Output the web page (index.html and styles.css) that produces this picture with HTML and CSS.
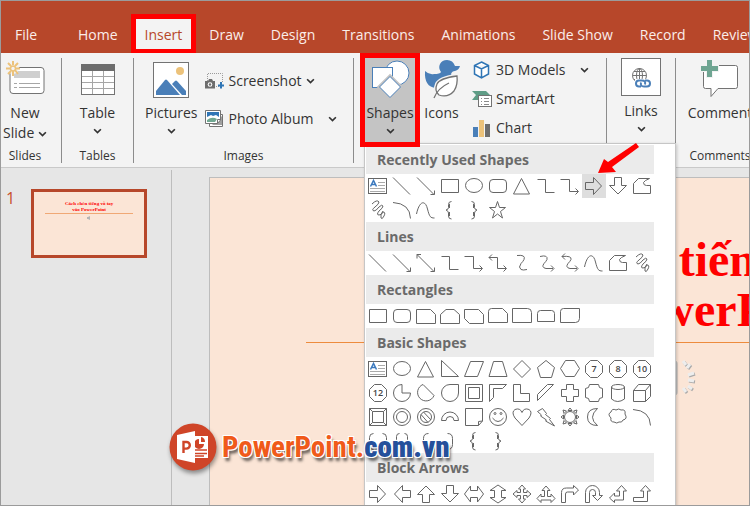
FILE: index.html
```html
<!DOCTYPE html>
<html lang="vi">
<head>
<meta charset="utf-8">
<title>PowerPoint</title>
<link rel="stylesheet" href="styles.css">
</head>
<body>
<div class="app">
  <nav class="tabs">
    <a class="tab tab-file" href="#file">File</a>
    <a class="tab" href="#home">Home</a>
    <a class="tab tab-active" href="#insert">Insert<span class="mark"></span></a>
    <a class="tab" href="#draw">Draw</a>
    <a class="tab" href="#design">Design</a>
    <a class="tab" href="#transitions">Transitions</a>
    <a class="tab" href="#animations">Animations</a>
    <a class="tab" href="#slideshow">Slide Show</a>
    <a class="tab" href="#record">Record</a>
    <a class="tab" href="#review">Review</a>
  </nav>

  <div class="ribbon">
    <section class="group group-slides">
      <div class="group-body">
        <button class="big">
          <svg class="icon" width="38" height="38" viewBox="0 0 38 38">
            <rect x="4" y="5.500" width="34" height="26" rx="3" fill="#fff" stroke="#737373"/>
            <rect x="8" y="9" width="26" height="7" fill="#cfcfcf"/>
            <path d="M8 21.500h3m2 0h21M8 25.500h3m2 0h21" stroke="#a6a6a6"/>
            <circle cx="7" cy="6" r="6" fill="#f3f3f3"/>
            <path d="M7-1V3M7 9v5M0 6.500h4M10 6.500h4M2 1l3 3M9 8l3 4M12 1L9 4M5 9l-3 3" stroke="#ecc27a" stroke-width="2"/>
            <circle cx="7" cy="6.500" r="2.500" fill="none" stroke="#ecc27a" stroke-width="1.500"/>
          </svg>
          <span>New</span>
          <span class="second">Slide <svg class="chev" viewBox="0 0 8 6"><path d="M1 1l3 3 3-3"/></svg></span>
        </button>
      </div>
      <h2>Slides</h2>
    </section>

    <section class="group group-tables">
      <div class="group-body">
        <button class="big">
          <svg class="icon" width="36" height="38" viewBox="0 0 36 38">
            <rect x="1.500" y="2.500" width="33" height="30" fill="#fff" stroke="#737373"/>
            <path d="M1 2h34v7H1z" fill="#6d6d6d"/>
            <path d="M12.500 9v23M23.500 9v23M2 14.500h32M2 20.500h32M2 26.500h32" stroke="#a6a6a6"/>
          </svg>
          <span>Table</span>
          <svg class="chev" viewBox="0 0 8 6"><path d="M1 1l3 3 3-3"/></svg>
        </button>
      </div>
      <h2>Tables</h2>
    </section>

    <section class="group group-images">
      <div class="group-body">
        <button class="big">
          <svg class="icon" width="36" height="38" viewBox="0 0 36 38">
            <rect x=".5" y=".5" width="35" height="35" fill="#fff" stroke="#737373"/>
            <circle cx="27" cy="9" r="4" fill="#ecc27a"/>
            <path d="M3 33V29L12 18q1-1 2 0l13 15z" fill="#4a7fb8"/>
            <path d="M19 22l3-3q1-1 2 0l9 10v4h-4z" fill="#4a7fb8"/>
          </svg>
          <span>Pictures</span>
          <svg class="chev" viewBox="0 0 8 6"><path d="M1 1l3 3 3-3"/></svg>
        </button>
        <div class="stack stack-two">
          <button class="small">
            <svg class="icon" width="20" height="18" viewBox="0 0 20 18">
              <path d="M2.500 9V1.500h15V11M9 14.500h6" fill="none" stroke="#9a9a9a" stroke-dasharray="1 1"/>
              <path d="M0 9h3l1-2h3l1 2h2v7.500H0z" fill="#6d6d6d"/>
              <circle cx="5" cy="12.500" r="2.300" fill="#fff"/><circle cx="5" cy="12.500" r="1.200" fill="#6d6d6d"/>
              <path d="M16 10v6.500M13 13.500h6" stroke="#2f75b5" stroke-width="2"/>
            </svg>
            Screenshot
            <svg class="chev" viewBox="0 0 8 6"><path d="M1 1l3 3 3-3"/></svg>
          </button>
          <button class="small">
            <svg class="icon" width="20" height="18" viewBox="0 0 20 18">
              <path d="M4.500 4.500h13v12h-13z" fill="#fff" stroke="#737373"/>
              <path d="M8 14l9-8v9H7z" fill="#a0a0a0"/>
              <path d="M.5 .5h15V10l-3 3.500H.5z" fill="#fff" stroke="#737373"/>
              <path d="M2 2h12v5l-3-2-3 1-2-1-4 2z" fill="#2f75b5"/>
              <path d="M2 10q5-4 10-1l-2 3H2z" fill="#71a892"/>
              <path d="M15.500 9.500h-3v4" fill="none" stroke="#737373"/>
            </svg>
            Photo Album
            <svg class="chev chev-far" viewBox="0 0 8 6"><path d="M1 1l3 3 3-3"/></svg>
          </button>
        </div>
      </div>
      <h2>Images</h2>
    </section>

    <section class="group group-illustrations">
      <div class="group-body">
        <div class="dropdown">
          <button class="big big-shapes" aria-expanded="true">
            <svg class="icon" width="42" height="38" viewBox="0 0 42 38">
              <circle cx="28" cy="11" r="12" fill="#fff" stroke="#4a7fb8"/>
              <rect x="3.500" y="5.500" width="20" height="20" fill="#fff" stroke="#4a7fb8"/>
              <path d="M21 14.500L31.500 25 21 35.500 10.500 25z" fill="#fff" stroke="#c4c4c4" stroke-width="4"/>
              <path d="M21 14.500L31.500 25 21 35.500 10.500 25z" fill="#fff" stroke="#4a7fb8"/>
            </svg>
            <span>Shapes</span>
            <svg class="chev" viewBox="0 0 8 6"><path d="M1 1l3 3 3-3"/></svg>
          </button>
          <div class="menu">
            <h3>Recently Used Shapes</h3>
            <div class="shape-grid" data-shapes="textbox line arrow rect oval round triangle elbow elbowArrow right down freeform scribble arc curve lbrace rbrace star" data-selected="right"></div>
            <h3>Lines</h3>
            <div class="shape-grid" data-shapes="line arrow doubleArrow elbow elbowArrow elbowDouble curved curvedArrow curvedDouble curve freeform scribble"></div>
            <h3>Rectangles</h3>
            <div class="shape-grid" data-shapes="rect round snipOne snipTop snipDiagonal snipRound roundOne roundTop roundDiagonal"></div>
            <h3>Basic Shapes</h3>
            <div class="shape-grid" data-shapes="textbox oval triangle rightTriangle parallelogram trapezoid diamond pentagon hexagon heptagon octagon decagon dodecagon pie chord teardrop frame halfFrame corner stripe cross plaque can cube bevel donut noSymbol blockArc folded smiley heart lightning sun moon cloud arc doubleBracket doubleBrace lbracket rbracket lbrace rbrace"></div>
            <h3>Block Arrows</h3>
            <div class="shape-grid" data-shapes="right left up down leftRight upDown quad threeWay bent uturn leftUp bentUp"></div>
          </div>
          <span class="mark mark-shapes"></span>
        </div>
        <button class="big big-icons">
          <svg class="icon" width="36" height="40" viewBox="0 0 36 40">
            <path d="M1 10q4 4 9 3 6 0 7-2-3-4-1-8 2-4 7-4 6 0 8 6h5q-1 4-5 5-3 0-4 3l2 4q1 10-9 10H12Q0 26 1 10z" fill="#4a7fb8"/>
            <path d="M33 15Q16 17 13 23q-3 7 2 11 9 3 15-4 4-6 3-15z" fill="#fff" stroke="#f3f3f3" stroke-width="4"/>
            <path d="M33 15Q16 17 13 23q-3 7 2 11 9 3 15-4 4-6 3-15z" fill="#fff" stroke="#737373" stroke-width="1.300"/>
            <path d="M10 37q4-10 15-15" fill="none" stroke="#737373" stroke-width="1.300"/>
          </svg>
          <span>Icons</span>
        </button>
        <div class="stack stack-three">
          <button class="small">
            <svg class="icon" width="20" height="18" viewBox="0 0 20 18">
              <path d="M9.500 1L16.500 4.500v8.500l-7 4-7-4V4.500zM2.500 4.500L9.500 8l7-3.500M9.500 8v9" fill="#fff" stroke="#2f75b5" stroke-width="1.500"/>
            </svg>
            3D Models
            <svg class="chev chev-far" viewBox="0 0 8 6"><path d="M1 1l3 3 3-3"/></svg>
          </button>
          <button class="small">
            <svg class="icon" width="20" height="18" viewBox="0 0 20 18">
              <path d="M0 1h14l4 4-4 5H0l4-5z" fill="#5f9c86"/>
              <rect x="6.500" y="5.500" width="13" height="11" fill="#fff" stroke="#737373"/>
              <path d="M9 8.500h1m2 0h5M9 11.500h1m2 0h5M9 14.500h1m2 0h5" stroke="#8a8a8a"/>
            </svg>
            SmartArt
          </button>
          <button class="small">
            <svg class="icon" width="20" height="18" viewBox="0 0 20 18">
              <path d="M1 8h5v10H1z" fill="#4a7fb8"/><path d="M7 1h5v17H7z" fill="#ecc27a"/><path d="M13 5h5v13h-5z" fill="#6d6d6d"/>
            </svg>
            Chart
          </button>
        </div>
      </div>
    </section>

    <section class="group group-links">
      <div class="group-body">
        <button class="big">
          <svg class="icon" width="40" height="38" viewBox="0 0 40 38">
            <rect x=".5" y=".5" width="39" height="37" fill="#fff" stroke="#737373"/>
            <g fill="none" stroke="#737373"><circle cx="18.500" cy="17.500" r="7"/><ellipse cx="18.500" cy="17.500" rx="3" ry="7"/><path d="M18.500 10v15M11.500 17.500h14M13 13.500h11M13 21.500h11"/></g>
            <rect x="14" y="21" width="16" height="9" fill="#fff"/>
            <g fill="none" stroke="#4a7fb8" stroke-width="2"><path d="M20 28.500h-2a3 3 0 010-6h3q4 0 3 4M24 22.500h2a3 3 0 010 6h-3q-4 0-3-4"/></g>
          </svg>
          <span>Links</span>
          <svg class="chev" viewBox="0 0 8 6"><path d="M1 1l3 3 3-3"/></svg>
        </button>
      </div>
    </section>

    <section class="group group-comments">
      <div class="group-body">
        <button class="big">
          <svg class="icon" width="40" height="38" viewBox="0 0 40 38">
            <path d="M3.500 3.500h32q2 0 2 2v19q0 2-2 2H18l-7 8v-8H5.500q-2 0-2-2z" fill="#fff" stroke="#737373"/>
            <path d="M9.500-2V16M0 6.500h19" stroke="#f3f3f3" stroke-width="7"/>
            <path d="M9.500-2V15M1 6.500h17" stroke="#6fa592" stroke-width="5"/>
          </svg>
          <span>Comment</span>
        </button>
      </div>
      <h2>Comments</h2>
    </section>
  </div>

  <main class="workspace">
    <aside class="thumbs">
      <span class="thumb-number">1</span>
      <div class="thumb">
        <p>Cách chèn tiếng vỗ tay<br>vào PowerPoint</p>
        <hr>
        <svg width="4" height="4" viewBox="0 0 4 4"><path d="M0 1h1l2-1v4l-2-1H0z" fill="#b5b5b5"/></svg>
      </div>
    </aside>
    <div class="canvas">
      <article class="slide">
        <h1>Cách chèn tiếng vỗ tay<br>vào PowerPoint</h1>
        <hr>
        <svg class="sound" width="76" height="44" viewBox="0 0 76 44">
          <path d="M4 14h12L28 6q3-2 3 2v28q0 4-3 2L16 30H4z" fill="#c9c9c9" stroke="#b0b0b0"/>
          <g transform="translate(1 1)" stroke="#a9a9a9" stroke-width="3"><path d="M37 5l3 4M44 8l-3 4M48 17l-6 2M48 25l-6-1M46 33l-4-3M40 36l-3-4"/></g>
          <path stroke="#ededed" stroke-width="3" d="M37 5l3 4M44 8l-3 4M48 17l-6 2M48 25l-6-1M46 33l-4-3M40 36l-3-4"/>
        </svg>
      </article>
    </div>
  </main>

  <svg class="pointer" width="46" height="36" viewBox="0 0 46 36">
    <path d="M40 1l3 4-27 20 4 5L2 31 8 17l4 3z" fill="#f00"/>
  </svg>

  <div class="brand">
    <svg width="48" height="48" viewBox="0 0 48 48">
      <circle cx="24" cy="24" r="23.500" fill="#cf4528"/>
      <path d="M25 13h14v22H25z" fill="#fff"/>
      <path d="M26 27h12M26 30.500h12M26 33h9" stroke="#cf4528" stroke-width="1.500"/>
      <path d="M30 16v5h5a5 5 0 11-5-5z" fill="#cf4528"/><path d="M32 14a5 5 0 014 5h-4z" fill="#cf4528"/>
      <path d="M8 12l18-4v32L8 36z" fill="#fff"/>
      <path d="M14.500 30V19h3a3.300 3.300 0 010 6.600h-3" fill="none" stroke="#cf4528" stroke-width="2.400"/>
    </svg>
    <span class="brand-name">PowerPoint.<b>com.vn</b></span>
  </div>
</div>
<script src="shapes.js"></script>
</body>
</html>
```
FILE: styles.css
```css
* { box-sizing: border-box; }

body {
  margin: 0;
  font-family: "Open Sans", "Noto Sans", sans-serif;
  font-size: 14px;
  color: #333;
}

h1, h2, h3, p { margin: 0; }

button {
  border: 0;
  padding: 0;
  background: none;
  color: inherit;
  font: inherit;
}

.app {
  position: relative;
  display: flex;
  flex-direction: column;
  height: 100vh;
  overflow: hidden;
  border: 1px solid #9b9b9b;
  background: #e6e6e6;
}

/* Tab strip */
.tabs {
  display: flex;
  flex: none;
  align-items: flex-end;
  gap: 1px;
  height: 52px;
  padding-left: 1px;
  background: #b7472a;
}

.tab {
  position: relative;
  flex: none;
  height: 36px;
  padding: 0 13px;
  line-height: 36px;
  color: #fbeeea;
  text-decoration: none;
  white-space: nowrap;
}

.tab-file { width: 62px; }

.tab-active {
  background: #f3f3f3;
  color: #b7472a;
}

.mark {
  position: absolute;
  inset: -3px -1px -1px;
  border: 5px solid #f00;
  pointer-events: none;
}

/* Ribbon */
.ribbon {
  position: relative;
  z-index: 2;
  display: flex;
  flex: none;
  height: 115px;
  padding: 5px 0 4px;
  border-bottom: 1px solid #c9c9c9;
  background: #f3f3f3;
}

.group {
  display: flex;
  flex: none;
  flex-direction: column;
  justify-content: space-between;
  border-right: 1px solid #8c8c8c;
}

.group h2 {
  font-size: 12px;
  font-weight: 400;
  line-height: 14px;
  text-align: center;
  white-space: nowrap;
}

.group-body {
  display: flex;
  justify-content: center;
}

.group-slides { width: 61px; padding-right: 12px; }
.group-tables { width: 72px; }
.group-images { width: 220px; }
.group-illustrations { width: 253px; }
.group-links { width: 69px; }
.group-comments { flex: 1 0 88px; border-right: 0; }
.group-images .group-body,
.group-illustrations .group-body { justify-content: flex-start; padding-left: 11px; }

.big {
  display: flex;
  flex: none;
  flex-direction: column;
  align-items: center;
  padding-top: 4px;
  line-height: 20px;
}

.big .icon { flex: none; margin-bottom: 3px; overflow: visible; }
.big > .chev { margin: 5px 0; }
.second { white-space: nowrap; }
.second .chev { vertical-align: middle; }

.group-links .big { padding-top: 0; }
.group-links .icon { margin-bottom: 5px; }

.chev {
  width: 9px;
  height: 7px;
  fill: none;
  stroke: #333;
  stroke-width: 1.5px;
}

.stack {
  display: flex;
  flex-direction: column;
}

.stack-two { gap: 18px; padding: 13px 0 0 7px; }
.stack-three { gap: 9px; padding: 2px 0 0 4px; }

.small {
  display: flex;
  align-items: center;
  gap: 4px;
  line-height: 20px;
  white-space: nowrap;
}

.chev-far { margin-left: 11px; }

/* Shapes menu */
.dropdown { position: relative; }

.big-shapes {
  width: 50px;
  height: 84px;
  background: #c4c4c4;
  box-shadow: 0 -5px 0 #c4c4c4;
}

.big-icons { width: 53px; padding-top: 3px; }
.big-icons .icon { margin-bottom: 2px; }

.mark-shapes { inset: -5px; }

.menu {
  position: absolute;
  top: 85px;
  left: -1px;
  width: 312px;
  padding: 1px 0 24px 1px;
  border: 1px solid #c6c6c6;
  background: #fff;
  box-shadow: 1px 1px 3px #0003;
}

.menu h3 {
  width: 288px;
  padding-left: 11px;
  background: #ebebeb;
  color: #6a6a6a;
  font-size: 14px;
  font-weight: 700;
  line-height: 29px;
}

.shape-grid {
  display: grid;
  grid-template-columns: repeat(12, 24px);
  grid-auto-rows: 24px;
}

.shape { display: block; }
.shape-selected { background: #dedede; }

.shape svg {
  display: block;
  width: 24px;
  height: 24px;
  fill: none;
  stroke: #666;
}

.shape text {
  fill: #444;
  stroke: none;
  font-size: 9px;
  font-weight: 600;
  text-anchor: middle;
}

/* Slide thumbnails and canvas */
.workspace {
  display: flex;
  flex: 1;
  min-height: 0;
}

.thumbs {
  display: flex;
  flex: none;
  align-items: flex-start;
  gap: 16px;
  width: 171px;
  margin-top: 2px;
  padding: 19px 0 0 5px;
  border-right: 1px solid #bdbdbd;
}

.thumb-number {
  color: #c8502f;
  font-size: 16px;
  line-height: 18px;
}

.thumb {
  display: flex;
  flex-direction: column;
  align-items: center;
  width: 116px;
  height: 69px;
  padding-top: 9px;
  border: 3px solid #b7472a;
  background: #fbe5d6;
}

.thumb p {
  color: #f00;
  font: 700 5px/6px "Liberation Serif", serif;
  text-align: center;
  white-space: nowrap;
}

.thumb hr {
  width: 88px;
  height: 1px;
  margin: 0 0 2px;
  border: 0;
  background: #f0a875;
}

.canvas {
  flex: 1;
  min-width: 0;
  padding: 9px 0 0 37px;
  overflow: hidden;
}

.slide {
  display: flex;
  flex-direction: column;
  align-items: center;
  width: 950px;
  height: 532px;
  padding-top: 57px;
  border: 1px solid #bdbdbd;
  background: #fbe5d6;
}

.slide h1 {
  color: #f00;
  font: 700 48px/50px "Liberation Serif", serif;
  text-align: center;
  white-space: nowrap;
}

.slide hr {
  width: 756px;
  height: 1px;
  margin: 7px 0 13px;
  border: 0;
  background: #ed8b3d;
}

/* Overlays */
.pointer {
  position: absolute;
  z-index: 3;
  top: 141px;
  left: 595px;
}

.brand {
  position: absolute;
  z-index: 3;
  top: 422px;
  left: 168px;
  display: flex;
  align-items: center;
  gap: 5px;
}

.brand > svg { filter: drop-shadow(1px 3px 2px #0006); }

.brand-name {
  color: #f05a1a;
  font: 700 29px/46px "Roboto Condensed", Roboto, "Liberation Sans", sans-serif;
  text-shadow: -1px -1px 0 #fff, 1px -1px 0 #fff, -1px 1px 0 #fff, 1px 1px 0 #fff, 2px 4px 3px #0009;
}

.brand-name b { color: #25509b; }
```
FILE: shapes.js
```js
// Outlines of the gallery shapes, each on a 24 x 24 cell.
const p = d => `<path d="${d}"/>`;
const octagon = 'M8.5 3.500h7l5 5v7l-5 5h-7l-5-5v-7z';
const numbered = n => p(octagon) + `<text x="12" y="15">${n}</text>`;

const shapes = {
  textbox: '<rect x="2.500" y="4.500" width="18" height="15"/>' +
    '<path d="M12 8.500h7M12 11.500h7M4 14.500h15M4 17.500h15" stroke="#aaa"/>' +
    '<path d="M4.500 12.500l3-6 3 6M6 10.500h3" stroke="#3a78bd" stroke-width="1.500"/>',
  line: p('M3 3.500l17 17'),
  arrow: p('M3 3.500l17 17M20.500 16.500v4h-4'),
  doubleArrow: p('M3 3.500l17 17M20.500 16.500v4h-4M3 7.500v-4h4'),
  rect: p('M3.500 5.500h17v13h-17z'),
  oval: '<ellipse cx="12" cy="11.500" rx="8.500" ry="7"/>',
  round: '<rect x="3.500" y="5.500" width="17" height="13" rx="3.500"/>',
  triangle: p('M11.500 4.500l8 15.500h-16z'),
  elbow: p('M3.500 5.500h8v13h9'),
  elbowArrow: p('M2.500 5.500h9v12h8.500M17.500 14.500l3 3-3 3'),
  elbowDouble: p('M3 6.500h8.500v11h8.500M17.500 14.500l3 3-3 3M6 3.500l-3 3 3 3'),
  right: p('M3.500 8.500h8v-5l8 8.500-8 8.500v-5h-8z'),
  left: p('M20.500 8.500h-8v-5l-8 8.500 8 8.500v-5h8z'),
  up: p('M8.500 20.500v-8h-5l8.500-8.500 8.500 8.500h-5v8z'),
  down: p('M8.500 3.500v8h-5l8.500 8.500 8.500-8.500h-5v-8z'),
  freeform: p('M3.500 19.500V9.500l5-5h11q-5 2-6 4 0 3 3 3h4v8z'),
  scribble: p('M6 6q5-5 7-2 0 2-4 5-4 3-1 4 2 0 5-4 3-3 4-1 0 2-4 5-3 4 0 4t4-3q3 0 1 4t-3 2q-1-4 2-7'),
  arc: p('M3 4.500q17 1 17.500 16'),
  curve: p('M2.500 16c3-14 9-14 11-5 2 8 3 9 7 9'),
  curved: p('M7 4.500q9-1 7 4-1 2-3 4-3 4 0 6 2 1 6 0'),
  curvedArrow: p('M6 5.500q8-2 7 3-1 2-3 4-3 4 2 5h7M17 14.500l3 3-3 3'),
  curvedDouble: p('M4 5.500q10-1 9 3-1 2-3 4-3 4 2 5h7M17 14.500l3 3-3 3M7 2.500l-3 3 3 3'),
  lbrace: p('M13.500 3.500q-3 0-3 3v3q0 2-2.500 2.500 2.500 1 2.500 3v3q0 3 3 3') + p('M11.500 6v4M11.500 14v4'),
  rbrace: p('M9.500 3.500q3 0 3 3v3q0 2 2.500 2.500-2.500 1-2.500 3v3q0 3-3 3') + p('M11.500 6v4M11.500 14v4'),
  star: p('M11.500 3.500l2 6h6l-5 4 2 6.500-5-4-5 4 2-6.500-5-4h6z'),
  snipOne: p('M2.500 5.500h14l5 5v9h-19z'),
  snipTop: p('M8 5.500h8l5.500 5v9h-19v-9z'),
  snipDiagonal: p('M2.500 5.500h14l5 5v9h-14l-5-5z'),
  snipRound: p('M5.500 4.500h11l5 5v9h-19v-11q0-3 3-3z'),
  roundOne: p('M2.500 4.500h15q4 0 4 4v10h-19z'),
  roundTop: p('M3.500 17.500v-8q0-3 3-3h11q3 0 3 3v8z'),
  roundDiagonal: p('M5.500 4.500h16v10q0 4-4 4h-15v-11q0-3 3-3z'),
  rightTriangle: p('M3.500 3.500v16h17z'),
  parallelogram: p('M8.500 4.500h13l-6 15h-13z'),
  trapezoid: p('M7.500 4.500h9l4.500 15h-18z'),
  diamond: p('M12 3.500l8.500 8.500-8.500 8.500L3.500 12z'),
  pentagon: p('M12 3.500l8.500 7-3 10h-11l-3-10z'),
  hexagon: p('M7.500 3.500h9l5 8-5 8h-9l-5-8z'),
  heptagon: numbered(7), octagon: numbered(8), decagon: numbered(10), dodecagon: numbered(12),
  pie: p('M12 3.500a8.500 8.500 0 108.500 8.500H12z'),
  chord: p('M9 3.500a8.500 8.500 0 1011 11z'),
  teardrop: p('M12 3.500h8.500V12a8.500 8.500 0 11-8.500-8.500z'),
  frame: p('M3.500 3.500h17v17h-17zM6.500 6.500h11v11h-11z'),
  halfFrame: p('M3.500 3.500h17l-4 4h-9v9l-4 4z'),
  corner: p('M3.500 3.500h7v9h9v8h-16z'),
  stripe: p('M3.500 13.500l10-10h6l-16 16z'),
  cross: p('M8.500 3.500h7v5h5v7h-5v5h-7v-5h-5v-7h5z'),
  plaque: p('M7.500 3.500h9q0 4 4 4v9q-4 0-4 4h-9q0-4-4-4v-9q4 0 4-4z'),
  can: '<ellipse cx="12" cy="6" rx="6.500" ry="2.500"/>' + p('M5.500 6v12q6 5 13 0V6'),
  cube: p('M3.500 9.500h12v11h-12zM3.500 9.500l5-6h12l-5 6M20.500 3.500v12l-5 5'),
  bevel: p('M3.500 3.500h17v17h-17zM6.500 6.500h11v11h-11zM3.500 3.500l3 3M20.500 3.500l-3 3M3.500 20.500l3-3M20.500 20.500l-3-3'),
  donut: '<circle cx="12" cy="12" r="8.500"/><circle cx="12" cy="12" r="5.500"/>',
  noSymbol: '<circle cx="12" cy="12" r="8.500"/><circle cx="12" cy="12" r="5.500"/>' + p('M7 9.500l7 8M9.500 7l7.500 8'),
  blockArc: p('M3.500 15.500a8.500 8.500 0 0117 0h-4.500a4 4 0 00-8 0z'),
  folded: p('M3.500 3.500h17v12.500l-4 4.500h-13zM20.500 16l-4 .5v4'),
  smiley: '<circle cx="12" cy="12" r="8.500"/><circle cx="9" cy="8.500" r="1"/><circle cx="15" cy="8.500" r="1"/>' + p('M6.500 13q5.500 7 11 0'),
  heart: p('M12 20.500L5 13Q1 7 5 4.500q5-2 7 3 2-5 7-3 4 2.500 0 8.500z'),
  lightning: p('M3.500 6.500l5-3 4 5-1 1 5 4-1 1 5 6.500-9-5 1-1-6-4 1-1z'),
  sun: '<circle cx="12" cy="12" r="5.500"/>' + p('M12 3l-2 2.500h4zM12 21l-2-2.500h4zM3 12l2.500-2v4zM21 12l-2.500-2v4zM5 5l1 3.500L8.500 6zM19 5l-3.500 1L18 8.500zM5 19l3.500-1L6 15.500zM19 19l-1-3.500-2.500 2.500z'),
  moon: p('M15.500 3.500q-10 0-10 8.500t10 8.500q-10-8 0-17z'),
  cloud: p('M5 13q-4-4 0-6 1-4 5-2 3-2 5 0 5-1 4 4 3 5-2 6-1 3-4 2-2 2-5 0-4 0-3-4z'),
  doubleBracket: p('M7.500 4.500q-4 0-4 4v8q0 4 4 4M16.500 4.500q4 0 4 4v8q0 4-4 4'),
  doubleBrace: p('M9.500 4.500q-3 0-3 3v3l-2 2 2 2v3q0 3 3 3M14.500 4.500q3 0 3 3v3l2 2-2 2v3q0 3-3 3'),
  lbracket: p('M14.500 4.500q-5 0-5 5v6q0 5 5 5'),
  rbracket: p('M9.500 4.500q5 0 5 5v6q0 5-5 5'),
  leftRight: p('M2.500 12l6-8v4.500h7V4l6 8-6 8v-4.500h-7V20z'),
  upDown: p('M12 3l8 5.500h-4.500v7H20L12 21l-8-5.500h4.500v-7H4z'),
  quad: p('M12 3l3.500 4h-2v3.500H17v-2l4 3.500-4 3.500v-2h-3.500V17h2L12 21l-3.500-4h2v-3.500H7v2L3 12l4-3.500v2h3.500V7h-2z'),
  threeWay: p('M12 4l4 4.500h-2.500v6H17V12l4 4.500-4 4v-2.500H7v2.500l-4-4L7 12v2.500h3.500v-6H8z'),
  bent: p('M3.500 20.500v-10q0-4.500 5-4.500h7V3.500L20.500 8l-5 5v-3h-6q-2 0-2 2v8.500z'),
  uturn: p('M3.500 20.500v-10a7 7 0 0114 0v3h3l-5 5-5-5h3v-3a3 3 0 00-6 0v10z'),
  leftUp: p('M15.500 3.500l5 5.500h-3v9h-9v2.500L3.500 16l5-5v3h5V9h-3z'),
  bentUp: p('M15.500 3.500l5 5.500h-3v10.500h-14v-4h10V9h-3z')
};

document.querySelectorAll('.shape-grid').forEach(grid => {
  grid.dataset.shapes.split(' ').forEach(name => {
    const button = document.createElement('button');
    button.className = 'shape' + (grid.dataset.selected === name ? ' shape-selected' : '');
    button.setAttribute('aria-label', name);
    button.innerHTML = `<svg viewBox="0 0 24 24">${shapes[name]}</svg>`;
    grid.append(button);
  });
});
```
